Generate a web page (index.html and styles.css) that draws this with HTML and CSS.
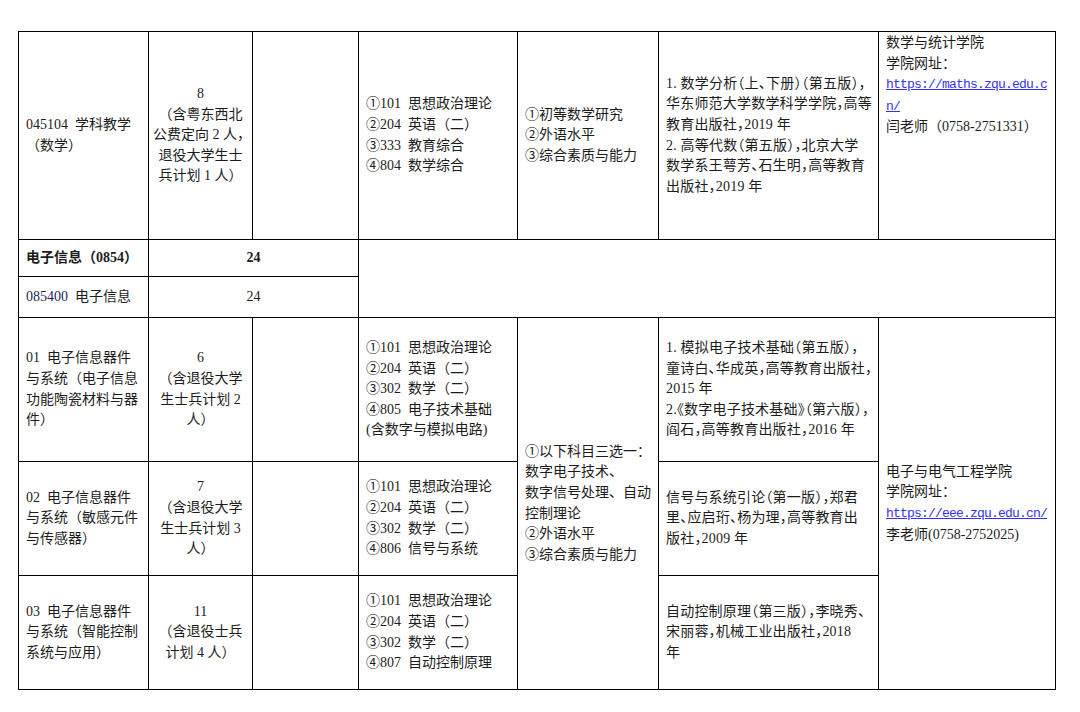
FILE: index.html
```html
<!DOCTYPE html>
<html lang="zh-CN">
<head>
<meta charset="utf-8">
<title>招生专业目录</title>
<link rel="stylesheet" href="styles.css">
</head>
<body>
<table class="plan">
  <colgroup>
    <col class="c-major">
    <col class="c-num">
    <col class="c-blank">
    <col class="c-exam">
    <col class="c-retest">
    <col class="c-books">
    <col class="c-contact">
  </colgroup>
  <tbody>
    <tr class="r1">
      <td>045104&ensp;学科教学<br>（数学）</td>
      <td class="center">8<br>（含粤东西北<br>公费定向 2 人，<br>退役大学生士<br>兵计划 1 人）</td>
      <td></td>
      <td>①101&ensp;思想政治理论<br>②204&ensp;英语（二）<br>③333&ensp;教育综合<br>④804&ensp;数学综合</td>
      <td>①初等数学研究<br>②外语水平<br>③综合素质与能力</td>
      <td class="books">1. 数学分析（上、下册）（第五版），<br>华东师范大学数学科学学院，高等<br>教育出版社，2019 年<br>2. 高等代数（第五版），北京大学<br>数学系王萼芳、石生明，高等教育<br>出版社，2019 年</td>
      <td class="top">数学与统计学院<br>学院网址：<br><a class="link" href="#">https://maths.zqu.edu.c<br>n/</a><br>闫老师（0758-2751331）</td>
    </tr>
    <tr class="r2">
      <td class="bold">电子信息（0854）</td>
      <td class="center bold" colspan="2">24</td>
      <td colspan="4" rowspan="2"></td>
    </tr>
    <tr class="r3">
      <td><span class="code">085400</span>&ensp;电子信息</td>
      <td class="center" colspan="2">24</td>
    </tr>
    <tr class="r4">
      <td>01&ensp;电子信息器件<br>与系统（电子信息<br>功能陶瓷材料与器<br>件）</td>
      <td class="center">6<br>（含退役大学<br>生士兵计划 2<br>人）</td>
      <td></td>
      <td>①101&ensp;思想政治理论<br>②204&ensp;英语（二）<br>③302&ensp;数学（二）<br>④805&ensp;电子技术基础<br>(含数字与模拟电路)</td>
      <td rowspan="3">①以下科目三选一：<br>数字电子技术、<br>数字信号处理、自动<br>控制理论<br>②外语水平<br>③综合素质与能力</td>
      <td class="books">1. 模拟电子技术基础（第五版），<br>童诗白、华成英，高等教育出版社，<br>2015 年<br>2.《数字电子技术基础》（第六版），<br>阎石，高等教育出版社，2016 年</td>
      <td rowspan="3">电子与电气工程学院<br>学院网址：<br><a class="link" href="#">https://eee.zqu.edu.cn/</a><br>李老师(0758-2752025)</td>
    </tr>
    <tr class="r5">
      <td>02&ensp;电子信息器件<br>与系统（敏感元件<br>与传感器）</td>
      <td class="center">7<br>（含退役大学<br>生士兵计划 3<br>人）</td>
      <td></td>
      <td>①101&ensp;思想政治理论<br>②204&ensp;英语（二）<br>③302&ensp;数学（二）<br>④806&ensp;信号与系统</td>
      <td class="books">信号与系统引论（第一版），郑君<br>里、应启珩、杨为理，高等教育出<br>版社，2009 年</td>
    </tr>
    <tr class="r6">
      <td>03&ensp;电子信息器件<br>与系统（智能控制<br>系统与应用）</td>
      <td class="center">11<br>（含退役士兵<br>计划 4 人）</td>
      <td></td>
      <td>①101&ensp;思想政治理论<br>②204&ensp;英语（二）<br>③302&ensp;数学（二）<br>④807&ensp;自动控制原理</td>
      <td class="books">自动控制原理（第三版），李晓秀、<br>宋丽蓉，机械工业出版社，2018<br>年</td>
    </tr>
  </tbody>
</table>
</body>
</html>
```

FILE: styles.css
```css
html, body {
  background: #ffffff;
}

body {
  margin: 0;
  padding: 31px 0 0 18px;
  font-family: "Liberation Serif", "Noto Sans CJK SC", serif;
  font-size: 14px;
  color: #1c1c1c;
}

.plan {
  border-collapse: collapse;
  table-layout: fixed;
  width: 1038px;
}

.c-major { width: 130px; }
.c-num { width: 104px; }
.c-blank { width: 106px; }
.c-exam { width: 159px; }
.c-retest { width: 141px; }
.c-books { width: 220px; }
.c-contact { width: 177px; }

.plan td {
  border: 1px solid #000;
  padding: 0 7px;
  line-height: 20.6px;
  vertical-align: middle;
  white-space: nowrap;
  text-align: left;
}

.r1 { height: 208px; }
.r2 { height: 37px; }
.r3 { height: 41px; }
.r4 { height: 144px; }
.r5 { height: 114px; }
.r6 { height: 114px; }

.plan td.center {
  text-align: center;
  padding: 0 4px;
}

.plan td.top {
  vertical-align: top;
  padding-top: 1px;
}

.bold {
  font-weight: bold;
}

.books {
  font-feature-settings: "halt";
  letter-spacing: 0.2px;
}

.code {
  color: #1f1f55;
}

.link {
  font-family: "Liberation Mono", monospace;
  font-size: 13px;
  letter-spacing: -0.8px;
  color: #3333ee;
  text-decoration: underline;
}
```
